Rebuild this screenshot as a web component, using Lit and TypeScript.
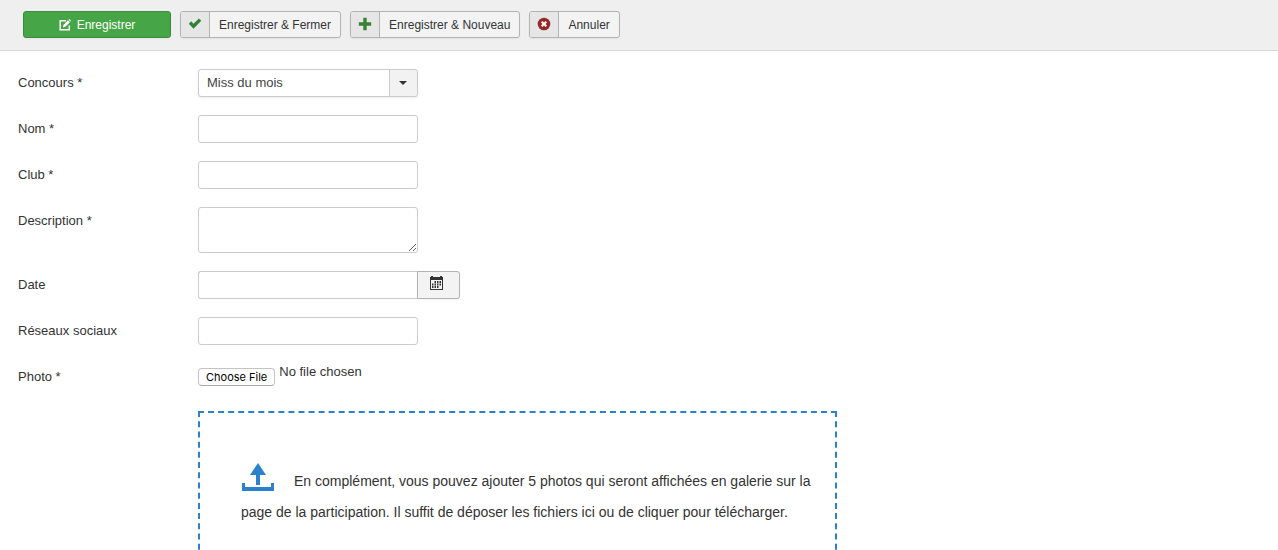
import { LitElement, html, css, svg } from "lit";
import { customElement, state } from "lit/decorators.js";

const checkIcon = svg`<path d="M.8 6.700 3.200 4.300l2.300 2.400L10.900 1.500l2.400 2.300-7.800 7.900z" fill="#378137"/>`;
const plusIcon = svg`<path d="M5.300.8h3.400v4.500h4.500v3.400H8.700v4.500H5.300V8.700H.8V5.300h4.500z" fill="#378137"/>`;
const cancelIcon = svg`<circle cx="7" cy="7" r="6.300" fill="#942a25"/><path d="M4.700 4.700l4.600 4.600M9.300 4.700l-4.600 4.600" stroke="#fff" stroke-width="2"/>`;

@customElement("app-root")
export class AppRoot extends LitElement {
  static styles = css`
    :host {
      display: block;
      font: 13px/18px "Helvetica Neue", "Liberation Sans", Arial, sans-serif;
      color: #333;
      background: #fff;
    }
    * {
      box-sizing: border-box;
    }
    input,
    textarea,
    select,
    button {
      font: inherit;
      color: inherit;
      margin: 0;
    }
    .toolbar {
      display: flex;
      flex-wrap: wrap;
      gap: 9px;
      padding: 11px 23px 12px;
      background: #efefef;
      border-bottom: 1px solid #d9d9d9;
    }
    .btn {
      display: flex;
      align-items: stretch;
      height: 27px;
      padding: 0;
      font-size: 12px;
      line-height: 26px;
      background: #f3f3f3;
      border: 1px solid #b3b3b3;
      border-radius: 3px;
      box-shadow: 0 1px 2px rgba(0, 0, 0, 0.05);
      overflow: hidden;
      cursor: pointer;
    }
    .btn-icon {
      display: flex;
      align-items: center;
      justify-content: center;
      width: 29px;
      padding-bottom: 1px;
      background: #e6e6e6;
      border-right: 1px solid #b3b3b3;
    }
    .btn-text {
      padding: 0 9px;
    }
    .btn-primary {
      justify-content: center;
      align-items: center;
      gap: 6px;
      width: 148px;
      color: #fff;
      background: #46a546;
      border-color: #3a8d3a;
    }
    .form {
      display: flex;
      flex-direction: column;
      gap: 18px;
      padding: 18px 0 18px 18px;
    }
    .row {
      display: grid;
      grid-template-columns: 180px 1fr;
      align-items: start;
    }
    .label {
      padding-top: 5px;
    }
    .field {
      display: block;
      width: 220px;
      height: 28px;
      padding: 4px 6px;
      background: #fff;
      border: 1px solid #ccc;
      border-radius: 3px;
    }
    .area {
      height: 46px;
      resize: both;
    }
    .select {
      appearance: none;
      padding: 0 36px 0 8px;
      color: #444;
      box-shadow: 0 1px 2px rgba(0, 0, 0, 0.08);
      background:
        url("data:image/svg+xml,%3Csvg xmlns='http://www.w3.org/2000/svg' width='28' height='26'%3E%3Cpath d='M0 0h28v26H0z' fill='%23f2f2f2'/%3E%3Cpath d='M0 0h1v26H0z' fill='%23ccc'/%3E%3Cpath d='M10 11h8l-4 4z' fill='%23333'/%3E%3C/svg%3E")
        right top no-repeat #fff;
    }
    .group {
      display: flex;
    }
    .group .field {
      width: 219px;
      border-right: 0;
      border-radius: 3px 0 0 3px;
    }
    .calendar {
      display: flex;
      width: 43px;
      height: 28px;
      padding: 4px 12px;
      background: #f3f3f3;
      border: 1px solid #b3b3b3;
      border-radius: 0 3px 3px 0;
      box-shadow: 0 1px 2px rgba(0, 0, 0, 0.05);
      cursor: pointer;
    }
    .file {
      display: block;
      width: 220px;
      height: 30px;
      padding: 0;
    }
    .file::file-selector-button {
      height: 18px;
      margin: 5px 4px 0 0;
      padding: 0 7px;
      vertical-align: top;
      font: 11px/16px Inter, "Liberation Sans", sans-serif;
      color: #000;
      background: #fff;
      border: 1px solid #c4c4c4;
      border-bottom-color: #aaa;
      border-radius: 4px;
    }
    .zone {
      width: 50vw;
      max-width: 100%;
      min-height: 200px;
      margin-left: 180px;
      padding: 50px 20px 50px 41px;
      border: 2px dashed #2a82cf;
      font-size: 14px;
      line-height: 31px;
      cursor: pointer;
    }
    .upload {
      width: 33px;
      height: 28px;
      margin-right: 20px;
      vertical-align: -5px;
    }
  `;

  @state() private contest = "Miss du mois";

  private action(icon: unknown, text: string) {
    return html`<button class="btn" type="button">
      <span class="btn-icon"
        ><svg width="14" height="14" viewBox="0 0 14 14" aria-hidden="true">${icon}</svg></span
      ><span class="btn-text">${text}</span>
    </button>`;
  }

  private textRow(id: string, label: string) {
    return html`<div class="row">
      <label class="label" for=${id}>${label}</label>
      <input class="field" id=${id} type="text" />
    </div>`;
  }

  render() {
    return html`
      <div class="toolbar">
        <button class="btn btn-primary" type="button">
          <svg width="12" height="12" viewBox="0 0 12 12" aria-hidden="true">
            <path d="M7 1.700H1.200v9.100h9.100V6.500" fill="none" stroke="#fff" stroke-width="1.500" />
            <path d="M3.800 8.400l.6-2.500L9 1.300l1.900 1.900-4.600 4.600zM9.600.7l.7-.7L12 1.800l-.6.8z" fill="#fff" />
          </svg>
          <span>Enregistrer</span>
        </button>
        ${this.action(checkIcon, "Enregistrer & Fermer")}
        ${this.action(plusIcon, "Enregistrer & Nouveau")}
        ${this.action(cancelIcon, "Annuler")}
      </div>
      <form class="form">
        <div class="row">
          <label class="label" for="contest">Concours *</label>
          <select
            class="field select"
            id="contest"
            .value=${this.contest}
            @change=${(e: Event) => (this.contest = (e.target as HTMLSelectElement).value)}
          >
            <option>Miss du mois</option>
          </select>
        </div>
        ${this.textRow("name", "Nom *")} ${this.textRow("club", "Club *")}
        <div class="row">
          <label class="label" for="description">Description *</label>
          <textarea class="field area" id="description"></textarea>
        </div>
        <div class="row">
          <label class="label" for="date">Date</label>
          <div class="group">
            <input class="field" id="date" type="text" />
            <button class="calendar" type="button" aria-label="Date">
              <svg width="13" height="14" viewBox="0 0 13 14" aria-hidden="true">
                <path d="M0 1h1V0h2v1h7V0h2v1h1v13H0z" fill="#333" />
                <path d="M1 4h11v9H1z" fill="#f3f3f3" />
                <path
                  d="M4.500 5h1.500v2H4.500zM7 5h1.500v2H7zM9.500 5H11v2H9.500zM2 7.500h1.500v2H2zM4.500 7.500H6v2H4.500zM7 7.500h1.500v2H7zM9.500 7.500H11v2H9.500zM2 10h1.500v2H2zM4.500 10H6v2H4.500zM7 10h1.500v2H7z"
                  fill="#333"
                />
              </svg>
            </button>
          </div>
        </div>
        ${this.textRow("social", "Réseaux sociaux")}
        <div class="row">
          <label class="label" for="photo">Photo *</label>
          <input class="file" id="photo" type="file" />
        </div>
        <div class="zone">
          <svg class="upload" viewBox="0 0 33 28" aria-hidden="true">
            <path d="M17 0 25 12h-6v10h-4V12H9zM1 20h3v4h26v-4h3v8H1z" fill="#2a82cf" />
          </svg>En complément, vous pouvez ajouter 5 photos qui seront affichées en galerie sur la page de
          la participation. Il suffit de déposer les fichiers ici ou de cliquer pour télécharger.
        </div>
      </form>
    `;
  }
}
